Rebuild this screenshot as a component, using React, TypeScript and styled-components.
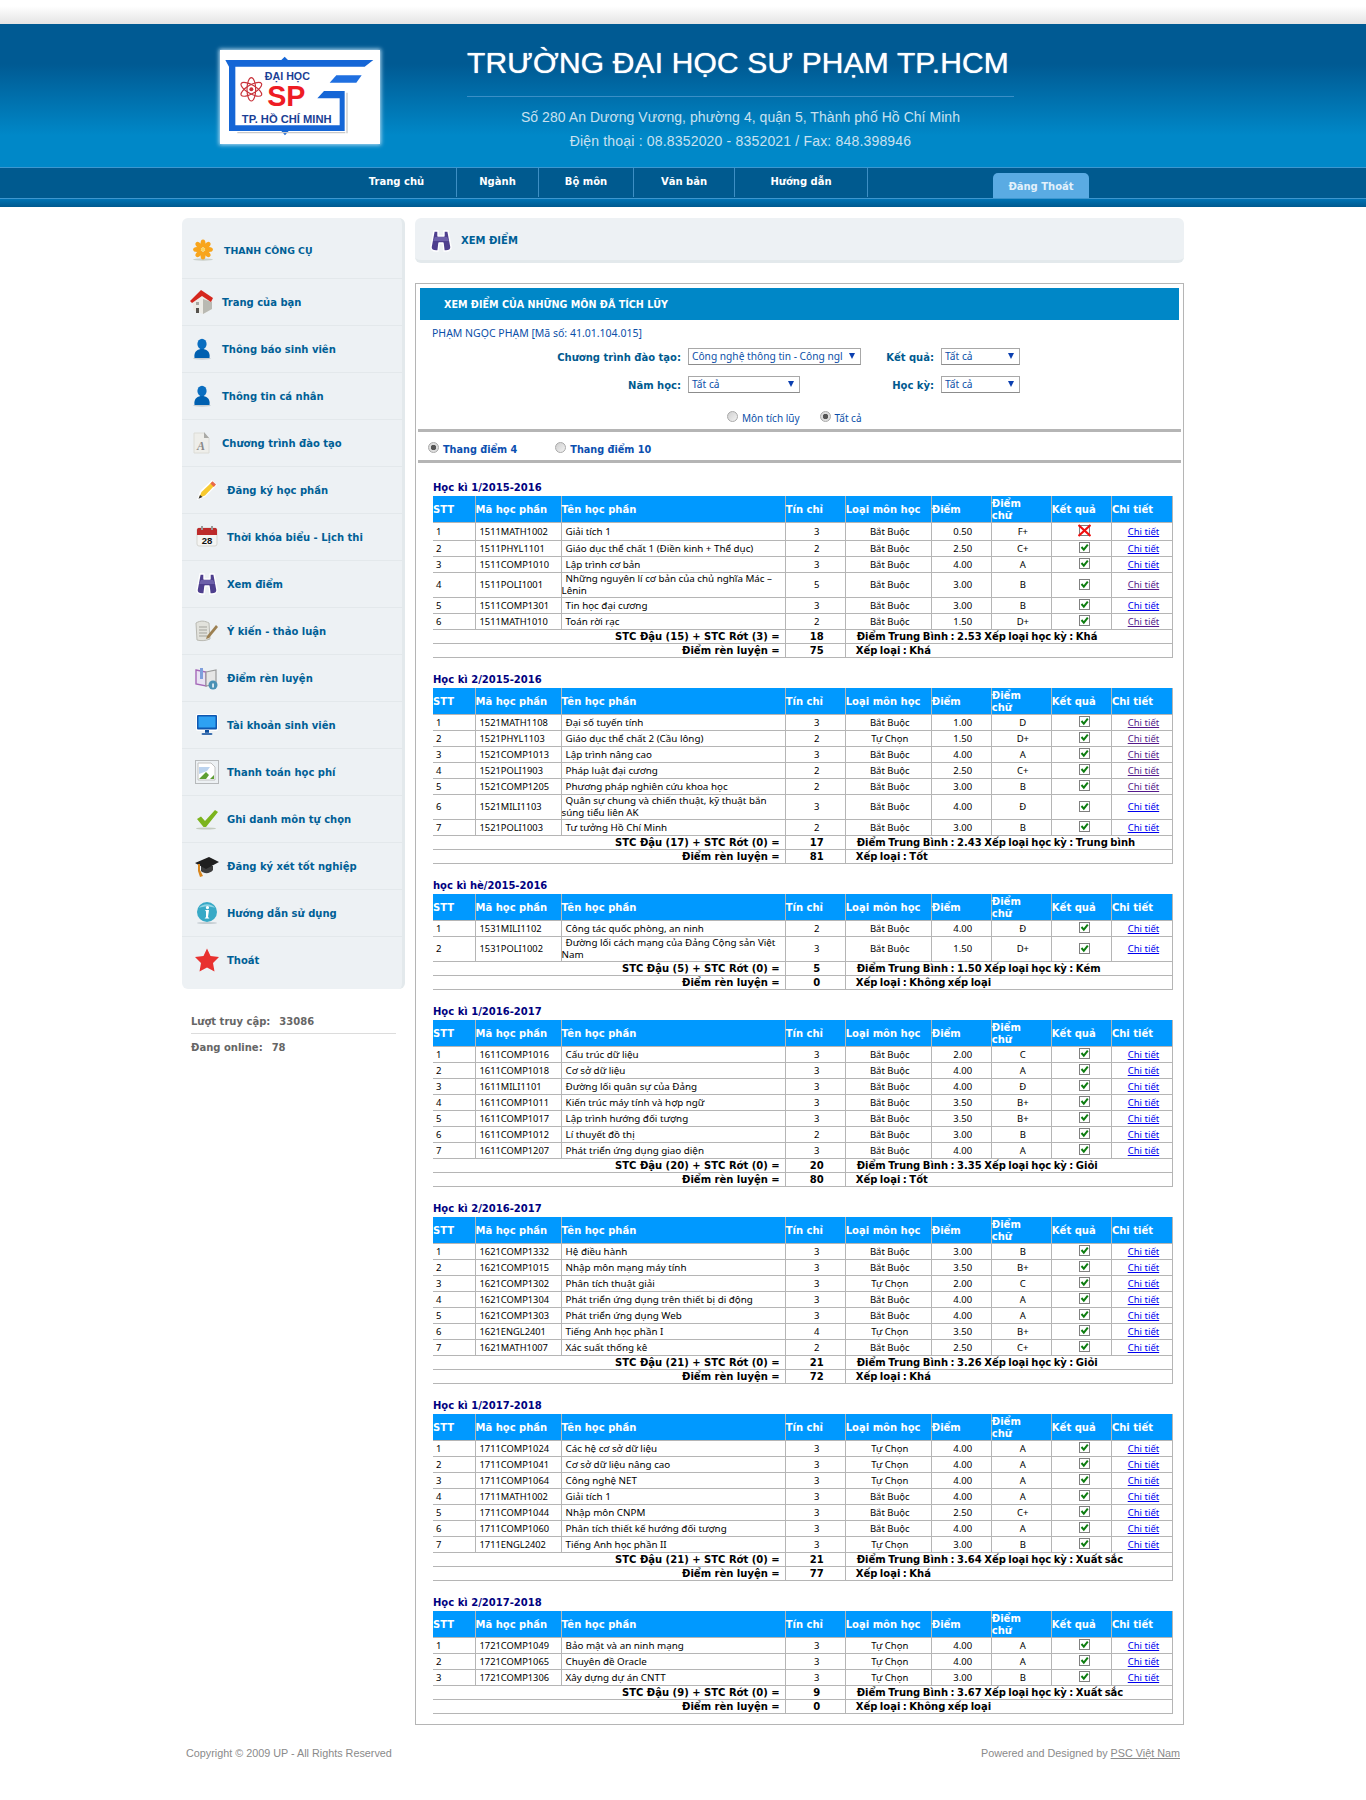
import { FC, ReactNode } from 'react'
import styled, { createGlobalStyle } from 'styled-components'

const BOLD_FONT = `'DejaVu Sans', Verdana, sans-serif`
const TEXT_FONT = `'Noto Sans', 'Liberation Sans', sans-serif`

const GlobalStyle = createGlobalStyle`
	html, body {
		margin: 0;
		padding: 0;
		background: #fff;
	}
	body {
		font-family: ${TEXT_FONT};
		font-size: 10px;
		color: #000;
	}
`

/* ---------- data ---------- */

const BB = 'Bắt Buộc'
const TC = 'Tự Chọn'

type Subject = {
	code: string
	name: string
	credits: number
	kind: string
	score: string
	letter: string
	failed?: boolean
	visited?: boolean
}

type Semester = {
	title: string
	passed: number
	failed: number
	total: number
	gpa: string
	rank: string
	conduct: number
	conductRank: string
	subjects: Subject[]
}

const s = (code: string, name: string, credits: number, kind: string, score: string, letter: string, visited = false, failed = false): Subject => ({
	code,
	name,
	credits,
	kind,
	score,
	letter,
	visited,
	failed,
})

const semesters: Semester[] = [
	{
		title: 'Học kì 1/2015-2016',
		passed: 15,
		failed: 3,
		total: 18,
		gpa: '2.53',
		rank: 'Khá',
		conduct: 75,
		conductRank: 'Khá',
		subjects: [
			s('1511MATH1002', 'Giải tích 1', 3, BB, '0.50', 'F+', false, true),
			s('1511PHYL1101', 'Giáo dục thể chất 1 (Điền kinh + Thể dục)', 2, BB, '2.50', 'C+'),
			s('1511COMP1010', 'Lập trình cơ bản', 3, BB, '4.00', 'A'),
			s('1511POLI1001', 'Những nguyên lí cơ bản của chủ nghĩa Mác –\nLênin', 5, BB, '3.00', 'B', true),
			s('1511COMP1301', 'Tin học đại cương', 3, BB, '3.00', 'B'),
			s('1511MATH1010', 'Toán rời rạc', 2, BB, '1.50', 'D+', true),
		],
	},
	{
		title: 'Học kì 2/2015-2016',
		passed: 17,
		failed: 0,
		total: 17,
		gpa: '2.43',
		rank: 'Trung bình',
		conduct: 81,
		conductRank: 'Tốt',
		subjects: [
			s('1521MATH1108', 'Đại số tuyến tính', 3, BB, '1.00', 'D', true),
			s('1521PHYL1103', 'Giáo dục thể chất 2 (Cầu lông)', 2, TC, '1.50', 'D+', true),
			s('1521COMP1013', 'Lập trình nâng cao', 3, BB, '4.00', 'A', true),
			s('1521POLI1903', 'Pháp luật đại cương', 2, BB, '2.50', 'C+', true),
			s('1521COMP1205', 'Phương pháp nghiên cứu khoa học', 2, BB, '3.00', 'B', true),
			s('1521MILI1103', 'Quân sự chung và chiến thuật, kỹ thuật bắn\nsúng tiểu liên AK', 3, BB, '4.00', 'Đ'),
			s('1521POLI1003', 'Tư tưởng Hồ Chí Minh', 2, BB, '3.00', 'B'),
		],
	},
	{
		title: 'học kì hè/2015-2016',
		passed: 5,
		failed: 0,
		total: 5,
		gpa: '1.50',
		rank: 'Kém',
		conduct: 0,
		conductRank: 'Không xếp loại',
		subjects: [
			s('1531MILI1102', 'Công tác quốc phòng, an ninh', 2, BB, '4.00', 'Đ'),
			s('1531POLI1002', 'Đường lối cách mạng của Đảng Cộng sản Việt\nNam', 3, BB, '1.50', 'D+'),
		],
	},
	{
		title: 'Học kì 1/2016-2017',
		passed: 20,
		failed: 0,
		total: 20,
		gpa: '3.35',
		rank: 'Giỏi',
		conduct: 80,
		conductRank: 'Tốt',
		subjects: [
			s('1611COMP1016', 'Cấu trúc dữ liệu', 3, BB, '2.00', 'C'),
			s('1611COMP1018', 'Cơ sở dữ liệu', 3, BB, '4.00', 'A'),
			s('1611MILI1101', 'Đường lối quân sự của Đảng', 3, BB, '4.00', 'Đ'),
			s('1611COMP1011', 'Kiến trúc máy tính và hợp ngữ', 3, BB, '3.50', 'B+'),
			s('1611COMP1017', 'Lập trình hướng đối tượng', 3, BB, '3.50', 'B+'),
			s('1611COMP1012', 'Lí thuyết đồ thị', 2, BB, '3.00', 'B'),
			s('1611COMP1207', 'Phát triển ứng dụng giao diện', 3, BB, '4.00', 'A'),
		],
	},
	{
		title: 'Học kì 2/2016-2017',
		passed: 21,
		failed: 0,
		total: 21,
		gpa: '3.26',
		rank: 'Giỏi',
		conduct: 72,
		conductRank: 'Khá',
		subjects: [
			s('1621COMP1332', 'Hệ điều hành', 3, BB, '3.00', 'B'),
			s('1621COMP1015', 'Nhập môn mạng máy tính', 3, BB, '3.50', 'B+'),
			s('1621COMP1302', 'Phân tích thuật giải', 3, TC, '2.00', 'C'),
			s('1621COMP1304', 'Phát triển ứng dụng trên thiết bị di động', 3, BB, '4.00', 'A'),
			s('1621COMP1303', 'Phát triển ứng dụng Web', 3, BB, '4.00', 'A'),
			s('1621ENGL2401', 'Tiếng Anh học phần I', 4, TC, '3.50', 'B+'),
			s('1621MATH1007', 'Xác suất thống kê', 2, BB, '2.50', 'C+'),
		],
	},
	{
		title: 'Học kì 1/2017-2018',
		passed: 21,
		failed: 0,
		total: 21,
		gpa: '3.64',
		rank: 'Xuất sắc',
		conduct: 77,
		conductRank: 'Khá',
		subjects: [
			s('1711COMP1024', 'Các hệ cơ sở dữ liệu', 3, TC, '4.00', 'A'),
			s('1711COMP1041', 'Cơ sở dữ liệu nâng cao', 3, TC, '4.00', 'A'),
			s('1711COMP1064', 'Công nghệ NET', 3, TC, '4.00', 'A'),
			s('1711MATH1002', 'Giải tích 1', 3, BB, '4.00', 'A'),
			s('1711COMP1044', 'Nhập môn CNPM', 3, BB, '2.50', 'C+'),
			s('1711COMP1060', 'Phân tích thiết kế hướng đối tượng', 3, BB, '4.00', 'A'),
			s('1711ENGL2402', 'Tiếng Anh học phần II', 3, TC, '3.00', 'B'),
		],
	},
	{
		title: 'Học kì 2/2017-2018',
		passed: 9,
		failed: 0,
		total: 9,
		gpa: '3.67',
		rank: 'Xuất sắc',
		conduct: 0,
		conductRank: 'Không xếp loại',
		subjects: [
			s('1721COMP1049', 'Bảo mật và an ninh mạng', 3, TC, '4.00', 'A'),
			s('1721COMP1065', 'Chuyên đề Oracle', 3, TC, '4.00', 'A'),
			s('1721COMP1306', 'Xây dựng dự án CNTT', 3, TC, '3.00', 'B'),
		],
	},
]

const columns: [string, number][] = [
	['STT', 42],
	['Mã học phần', 86],
	['Tên học phần', 224],
	['Tín chỉ', 60],
	['Loại môn học', 86],
	['Điểm', 60],
	['Điểm\nchữ', 60],
	['Kết quả', 60],
	['Chi tiết', 61],
]

/* ---------- drawings ---------- */

const Svg: FC<{ children: ReactNode }> = ({ children }) => (
	<svg width='24' height='24' viewBox='0 0 24 24'>
		{children}
	</svg>
)

const FlowerIcon = () => (
	<Svg>
		<ellipse cx='12' cy='21.5' rx='10' ry='1.2' fill='#c9cfc8' />
		{[0, 45, 90, 135, 180, 225, 270, 315].map((a) => (
			<ellipse key={a} cx='12' cy='5.6' rx='2.5' ry='4' fill='#f8a51c' transform={`rotate(${a} 12 11.5)`} />
		))}
		<circle cx='12' cy='11.5' r='2' fill='#fbd25a' />
	</Svg>
)

const HouseIcon = () => (
	<Svg>
		<path d='M3 12 L13 6 L22 11 V19 L13 24 L3 20 Z' fill='#ecebe6' />
		<path d='M13 9 L22 12 V19 L13 24 Z' fill='#b9b9b2' />
		<path d='M0 11 L11 0 L14 2 L23 8 L21 12 L12 6 L2 13 Z' fill='#d5271d' />
		<rect x='6' y='18' width='3' height='5' fill='#55524d' />
		<rect x='6' y='12' width='3' height='3' fill='#a9a79f' />
	</Svg>
)

const PersonIcon = () => (
	<Svg>
		<ellipse cx='12' cy='21.5' rx='9' ry='1.2' fill='#c6cdd2' />
		<ellipse cx='12' cy='7' rx='4.6' ry='5.2' fill='#0a6ec0' />
		<path d='M4.5 21 C3.5 14 8 12 12 12 C16 12 20.5 14 19.5 21 Z' fill='#0060b0' />
	</Svg>
)

const DocIcon = () => (
	<Svg>
		<path d='M4 2 H14 L19 7 V22 H4 Z' fill='#eeeeea' stroke='#dcdcd6' />
		<path d='M14 1 L19 7 H14 Z' fill='#aaaaa6' />
		<text x='11' y='18.5' fontSize='12' fontStyle='italic' fontFamily='Liberation Serif, serif' fill='#888' textAnchor='middle'>
			A
		</text>
	</Svg>
)

const PencilIcon = () => (
	<Svg>
		<path d='M2 22 L5 13 L17 2 L22 7 L10 19 Z' fill='#fff' />
		<path d='M4 20 L6.5 14 L17 4 L20 7 L10 17.5 Z' fill='#f7c92e' />
		<path d='M15.4 5.5 L17.5 3.2 L21 6.6 L18.8 9 Z' fill='#e8694a' />
		<path d='M3.5 20.8 L5 17 L7.5 19 Z' fill='#333' />
	</Svg>
)

const CalendarIcon = () => (
	<Svg>
		<rect x='2' y='3' width='20' height='18' rx='2' fill='#f4f4f2' stroke='#d5d5d0' />
		<path d='M2 10 V5 C2 3.5 3 3 4 3 H20 C21 3 22 3.5 22 5 V10 Z' fill='#bd2a2a' />
		<rect x='6' y='1' width='2' height='4' fill='#999' />
		<rect x='16' y='1' width='2' height='4' fill='#999' />
		<text x='12' y='19' fontSize='9.5' fontWeight='700' fontFamily='Liberation Sans, sans-serif' fill='#111' textAnchor='middle'>
			28
		</text>
	</Svg>
)

const BinocularsIcon = () => (
	<Svg>
		<path
			d='M5 2 H9 V7 H15 V2 H19 L22 18 C22 21 20 22 17 22 H15 L14 14 H10 L9 22 H7 C4 22 2 21 2 18 Z'
			fill='#4e3f8e'
			stroke='#fff'
			strokeWidth='1.4'
			strokeLinejoin='round'
		/>
		<path d='M6 8 H18 L20 12 H4 Z' fill='#6d60aa' />
	</Svg>
)

const NoteIcon = () => (
	<Svg>
		<path d='M1 4 C6 1 10 2 14 4 L15 20 C10 22 6 22 2 21 Z' fill='#e2e2dc' stroke='#b9b9b2' />
		<path d='M4 8 H12 M4 11 H12 M4 14 H12 M4 17 H12' stroke='#a3a39c' />
		<path d='M12 17 L21 6 L23 8 L14 19 L11 20 Z' fill='#9c8052' />
	</Svg>
)

const BookIcon = () => (
	<Svg>
		<path d='M1 4 L11 6 V20 L1 18 Z' fill='#e9e3f3' stroke='#a568b8' strokeWidth='1.4' />
		<path d='M11 6 L21 4 V18 L11 20 Z' fill='#e6e6e6' stroke='#9a9a9a' strokeWidth='1.2' />
		<rect x='5' y='2' width='3' height='11' fill='#7f9fdc' />
		<circle cx='18' cy='19' r='4.5' fill='#4a91b5' />
		<rect x='17.3' y='17.5' width='1.5' height='4' fill='#fff' />
	</Svg>
)

const MonitorIcon = () => (
	<Svg>
		<rect x='1' y='1' width='22' height='17' rx='2' fill='#fff' />
		<rect x='2' y='2' width='20' height='14.5' rx='1' fill='#0f57b0' />
		<rect x='3.5' y='3.5' width='17' height='11' fill='#2ea1f2' />
		<rect x='10' y='17' width='4' height='3' fill='#0c4d9c' />
		<rect x='6.5' y='20' width='11' height='2' rx='1' fill='#0c4d9c' stroke='#fff' strokeWidth='.4' />
	</Svg>
)

const BrokenImageIcon = () => (
	<Svg>
		<rect x='.5' y='.5' width='23' height='23' fill='#edf1f4' stroke='#b6b9bb' />
		<path d='M3 3 H16 L20 7 V20 H3 Z' fill='#fff' stroke='#c2c2c2' />
		<path d='M4 7 H15 L12 11 L4 14 Z' fill='#bcd3ee' />
		<path d='M4 19 L11 12 L14 15 L11 19 Z M15 19 L19 15 V19 Z' fill='#5e9f33' />
	</Svg>
)

const CheckIcon = () => (
	<Svg>
		<ellipse cx='11' cy='21.5' rx='10' ry='1' fill='#c4cbc0' />
		<path d='M2 12 L6 9.5 L10 14 L20 3 L23 5 L11 20 H8.5 Z' fill='#7cb41d' />
	</Svg>
)

const CapIcon = () => (
	<Svg>
		<path d='M6 12 V17 C9 20 15 20 18 16 V12 Z' fill='#3d3d3d' />
		<path d='M0 9 L14 3 L24 8 L11 15 Z' fill='#1f1f1f' />
		<path d='M3 10 V17 L5 23 L8 22 L5 16 V10 Z' fill='#d8861e' />
	</Svg>
)

const InfoIcon = () => (
	<Svg>
		<ellipse cx='12' cy='22' rx='10' ry='1.1' fill='#c4cdd2' />
		<circle cx='12' cy='11' r='10' fill='#38a9c6' />
		<path d='M4 7 C7 2 17 2 20 7 C15 5 9 5 4 7 Z' fill='#8fd4e4' />
		<path d='M12.5 5 a1.6 1.6 0 1 1 -.1 0 Z M10 9 H14 L13 16 L14.5 17.5 H9.5 L11 16 L11 10.5 Z' fill='#fff' />
	</Svg>
)

const StarIcon = () => (
	<Svg>
		<path d='M12 0.5 L15.5 8 L24 9 L18 15 L19.5 23.5 L12 19.5 L4.5 23.5 L6 15 L0 9 L8.5 8 Z' fill='#e8312f' />
	</Svg>
)

const Logo = () => (
	<svg width='160' height='94' viewBox='6 12 480 282'>
		<path
			d='M22 42 H190 L200 32 L210 42 H466 L440 62 H52 V238 H365 V157 H298 L318 135 H380 V255 H212 L201 268 L190 255 H33 V62 Z'
			fill='#1566d6'
		/>
		<path d='M355 88 H431 L415 110 H335 Z' fill='#1f6fe0' />
		<path d='M58 258 H382 V262 H58 Z M385 140 H389 V262 H385 Z' fill='#c9c9c9' />
		<g fill='none' stroke='#c8323a' strokeWidth='3.5'>
			<ellipse cx='100' cy='130' rx='35' ry='13' transform='rotate(30 100 130)' />
			<ellipse cx='100' cy='130' rx='35' ry='13' transform='rotate(-30 100 130)' />
			<ellipse cx='100' cy='130' rx='35' ry='13' transform='rotate(90 100 130)' />
		</g>
		<circle cx='100' cy='130' r='6' fill='#c8323a' />
		<text x='208' y='102' fontFamily='Liberation Sans, sans-serif' fontSize='32' fontWeight='700' fill='#1b3f95' textAnchor='middle'>
			ĐẠI HỌC
		</text>
		<text x='205' y='179' fontFamily='Liberation Sans, sans-serif' fontSize='86' fontWeight='700' fill='#ee1c25' textAnchor='middle'>
			SP
		</text>
		<text x='206' y='230' fontFamily='Liberation Sans, sans-serif' fontSize='33.5' fontWeight='700' fill='#1b3f95' textAnchor='middle'>
			TP. HỒ CHÍ MINH
		</text>
	</svg>
)

const ResultMark: FC<{ failed?: boolean }> = ({ failed }) => (
	<svg width='13' height='13' viewBox='0 0 13 13'>
		<rect x='1.5' y='1.5' width='10' height='10' fill='#fff' stroke='#808080' />
		{failed ? (
			<path d='M0.5 1 L12.5 12 M12.5 1 L0.5 12' stroke='#f01010' strokeWidth='2.2' />
		) : (
			<path d='M3.5 6 L5.8 8.6 L9.8 3.6' fill='none' stroke='#0d7d10' strokeWidth='2' />
		)}
	</svg>
)

/* ---------- chrome ---------- */

const TopStrip = styled.div`
	height: 24px;
	background: linear-gradient(#fff 0%, #fff 25%, #e4e4e4 100%);
`

const HeaderBand = styled.header`
	height: 143px;
	background: linear-gradient(#005a93 0%, #005a93 28%, #0088c8 78%, #0088c8 100%);
`

const Frame = styled.div`
	width: 1002px;
	margin: 0 auto;
`

const HeaderInner = styled(Frame)`
	display: flex;
	height: 100%;
`

const LogoBox = styled.div`
	width: 160px;
	height: 94px;
	margin: 26px 0 0 38px;
	background: #fff;
	box-shadow: 0 0 4px 1px #b9dcf2;
	line-height: 0;
`

const SchoolInfo = styled.div`
	width: 547px;
	margin-left: 87px;
	text-align: center;
	font-family: 'Liberation Sans', Arial, sans-serif;
	color: #c9e1f0;
`

const SchoolName = styled.h1`
	box-sizing: border-box;
	margin: 19px 0 0;
	height: 39px;
	padding-right: 9px;
	font-size: 30px;
	line-height: 39px;
	font-weight: 400;
	letter-spacing: 0.15px;
	color: #fff;
	white-space: nowrap;
	text-shadow: 0 0 1px #fff;
`

const Divider = styled.div`
	height: 1px;
	margin: 14px 0 8px;
	background: #3a8fc6;
`

const InfoLine = styled.div<{ $spacing: number }>`
	font-size: 14px;
	line-height: 24px;
	letter-spacing: ${(p) => p.$spacing}px;
	white-space: nowrap;
`

const NavBand = styled.nav`
	height: 30px;
	border-top: 1px solid #3d97cf;
	border-bottom: 1px solid #3d97cf;
	background: #005a8f;
`

const NavInner = styled(Frame)`
	display: flex;
	height: 100%;
	padding-left: 155px;
	box-sizing: border-box;
`

const NavItem = styled.a<{ $w: number }>`
	width: ${(p) => p.$w}px;
	box-sizing: border-box;
	height: 29px;
	text-align: center;
	font: 700 10px/27px ${BOLD_FONT};
	color: #fff;
	border-right: 1px solid #3d8fc4;
`

const LogoutTab = styled.a`
	margin: 5px 95px 0 auto;
	width: 96px;
	height: 25px;
	border-radius: 5px 5px 0 0;
	background: #5aabe3;
	color: #e2f1fb;
	text-align: center;
	font: 700 10px/27px ${BOLD_FONT};
`

const NavFoot = styled.div`
	height: 8px;
	background: linear-gradient(#0073b4, #00598f);
`

/* ---------- sidebar ---------- */

const Page = styled(Frame)`
	display: flex;
	gap: 10px;
	padding-top: 11px;
`

const Side = styled.aside`
	width: 223px;
	flex: none;
`

const SideMenu = styled.div`
	background: #edf1f4;
	border-right: 3px solid #e3e9ec;
	border-radius: 6px;
	overflow: hidden;
`

const SideRow = styled.a<{ $pad: number; $h?: number; $gap?: number; $top?: number; $bottom?: number; $plain?: boolean }>`
	display: flex;
	align-items: center;
	box-sizing: border-box;
	height: ${(p) => p.$h ?? 47}px;
	padding: ${(p) => p.$top ?? 0}px 0 ${(p) => p.$bottom ?? 0}px ${(p) => p.$pad}px;
	gap: ${(p) => p.$gap ?? 8}px;
	border-bottom: ${(p) => (p.$plain ? 'none' : '1px solid #e3e8eb')};
	font: 700 10px ${BOLD_FONT};
	color: #005f96;
	white-space: nowrap;

	svg {
		flex: none;
	}
`

const SideHeading = styled.span`
	font-size: 9.4px;
`

const Stats = styled.div`
	margin: 26px 9px 0;
	font: 700 10px/14px ${BOLD_FONT};
	color: #666;
`

const StatRow = styled.div<{ $line?: boolean }>`
	display: flex;
	gap: 9px;
	height: 18px;
	border-bottom: ${(p) => (p.$line ? '1px solid #dcdcdc' : 'none')};
	margin-bottom: 7px;
`

/* ---------- main column ---------- */

const Main = styled.main`
	width: 769px;
	flex: none;
`

const TitlePanel = styled.div`
	display: flex;
	align-items: center;
	gap: 8px;
	box-sizing: border-box;
	height: 45px;
	padding: 3px 0 0 14px;
	background: #edf1f4;
	border-bottom: 3px solid #e3e9ec;
	border-radius: 6px;
	font: 700 10px ${BOLD_FONT};
	color: #005f96;
`

const ContentBox = styled.section`
	box-sizing: border-box;
	height: 1442px;
	margin-top: 20px;
	padding: 4px 3px 0;
	border: 1px solid #b5b5b5;
`

const BlueBar = styled.h2`
	height: 32px;
	margin: 0 1px;
	padding-left: 24px;
	background: #0087c7;
	color: #fff;
	font: 700 9.6px/34px ${BOLD_FONT};
`

const StudentName = styled.div`
	margin: 6px 0 8px 13px;
	height: 14px;
	line-height: 14px;
	font-size: 10.5px;
	color: #0b4fa8;
`

const FilterRow = styled.div`
	display: flex;
	align-items: center;
	height: 17px;
	margin-bottom: 11px;
`

const FilterLabel = styled.label<{ $w: number }>`
	width: ${(p) => p.$w}px;
	margin-right: 7px;
	padding-top: 1px;
	text-align: right;
	font: 700 10px ${BOLD_FONT};
	color: #005a8f;
	white-space: nowrap;
`

const SelectBox = styled.div<{ $w: number }>`
	position: relative;
	box-sizing: border-box;
	width: ${(p) => p.$w}px;
	height: 17px;
	padding-left: 3px;
	border: 1px solid #a8a8a8;
	border-bottom-color: #8c8c8c;
	background: #fff;
	color: #0b4fa8;
	font-size: 10.2px;
	line-height: 14px;
	white-space: nowrap;
	overflow: hidden;

	&::after {
		content: '';
		position: absolute;
		top: 4px;
		right: 5px;
		border-style: solid;
		border-width: 6px 3px 0;
		border-color: #0b3fb0 transparent transparent;
	}
`

const RadioRow = styled.div`
	display: flex;
	align-items: center;
	height: 14px;
	margin: 18px 0 4px 308px;
	color: #0b4fa8;
	font-size: 10px;
`

const Radio = styled.span<{ $on?: boolean }>`
	display: inline-block;
	box-sizing: border-box;
	width: 11px;
	height: 11px;
	margin-right: 4px;
	position: relative;
	top: -2px;
	border-radius: 50%;
	border: 1px solid #a9a9a9;
	background: ${(p) =>
		p.$on
			? 'radial-gradient(circle, #555 0 2.5px, #ddd 3px)'
			: 'linear-gradient(135deg, #cfcfcf, #f2f2f2)'};
`

const RadioText = styled.span<{ $mr?: number }>`
	margin-right: ${(p) => p.$mr ?? 0}px;
`

const GrayRule = styled.div`
	height: 3px;
	margin: 0 -1px;
	background: #b5b5b5;
`

const ScaleRow = styled.div`
	display: flex;
	align-items: center;
	height: 28px;
	box-sizing: border-box;
	padding: 6px 0 0 9px;
	font: 700 9.7px ${BOLD_FONT};
	color: #0b4fb0;
`

const SemesterList = styled.div`
	padding-top: 16px;
`

const SemesterBlock = styled.div`
	margin: 0 0 13px 14px;
`

const SemesterTitle = styled.h3`
	height: 17px;
	margin: 0;
	font: 700 10px/17px ${BOLD_FONT};
	color: #000080;
`

const GradeTable = styled.table`
	width: 740px;
	table-layout: fixed;
	border-collapse: collapse;
	font-size: 9.5px;
	line-height: 12px;

	td,
	th {
		box-sizing: border-box;
		padding: 0;
		border: 1px solid #b5b5b5;
	}
	tr > *:first-child {
		border-left: none;
	}
`

const HeadRow = styled.tr`
	height: 26px;
`

const HeadCell = styled.th<{ $w: number }>`
	width: ${(p) => p.$w}px;
	background: #0099ff;
	color: #fff;
	text-align: left;
	white-space: pre-line;
	font: 700 10px/12px ${BOLD_FONT};
	border-top-color: #0099ff !important;
`

const DataRow = styled.tr<{ $h: number }>`
	height: ${(p) => p.$h}px;
`

const Cell = styled.td<{ $indent?: number; $size?: number }>`
	text-align: ${(p) => (p.$indent === undefined ? 'center' : 'left')};
	text-indent: ${(p) => p.$indent ?? 0}px;
	font-size: ${(p) => p.$size ?? 9.5}px;
	white-space: pre-line;
	padding-left: ${(p) => (p.$indent === undefined ? 3 : 0)}px !important;
`

const MarkCell = styled.td`
	text-align: center;
	line-height: 0;
	padding-left: 6px !important;

	svg {
		position: relative;
		top: -1px;
	}
`

const DetailLink = styled.a<{ $visited?: boolean }>`
	color: ${(p) => (p.$visited ? '#551a8b' : '#0000ee')};
	text-decoration: underline;
`

const SumRow = styled.tr`
	height: 14px;
	font: 700 10px/13px ${BOLD_FONT};
`

const SumRight = styled.td`
	text-align: right;
	padding-right: 5px !important;
`

const SumCenter = styled.td`
	text-align: center;
	padding-left: 3px !important;
`

const SumLeft = styled.td<{ $pad: number }>`
	padding-left: ${(p) => p.$pad}px !important;
	word-spacing: -1px;
`

const Footer = styled(Frame)`
	display: flex;
	justify-content: space-between;
	box-sizing: border-box;
	height: 75px;
	padding: 21px 4px 0 4px;
	font: 10.8px/14px 'Liberation Sans', Arial, sans-serif;
	color: #8a8a8a;

	a {
		text-decoration: underline;
	}
`

/* ---------- parts ---------- */

const menu: [string, ReactNode, number][] = [
	['Trang của bạn', <HouseIcon />, 8],
	['Thông báo sinh viên', <PersonIcon />, 8],
	['Thông tin cá nhân', <PersonIcon />, 8],
	['Chương trình đào tạo', <DocIcon />, 8],
	['Đăng ký học phần', <PencilIcon />, 13],
	['Thời khóa biểu - Lịch thi', <CalendarIcon />, 13],
	['Xem điểm', <BinocularsIcon />, 13],
	['Ý kiến - thảo luận', <NoteIcon />, 13],
	['Điểm rèn luyện', <BookIcon />, 13],
	['Tài khoản sinh viên', <MonitorIcon />, 13],
	['Thanh toán học phí', <BrokenImageIcon />, 13],
	['Ghi danh môn tự chọn', <CheckIcon />, 13],
	['Đăng ký xét tốt nghiệp', <CapIcon />, 13],
	['Hướng dẫn sử dụng', <InfoIcon />, 13],
]

const SemesterTable: FC<{ data: Semester }> = ({ data }) => (
	<SemesterBlock>
		<SemesterTitle>{data.title}</SemesterTitle>
		<GradeTable>
			<thead>
				<HeadRow>
					{columns.map(([label, w]) => (
						<HeadCell key={label} $w={w}>
							{label}
						</HeadCell>
					))}
				</HeadRow>
			</thead>
			<tbody>
				{data.subjects.map((row, i) => (
					<DataRow key={row.code} $h={row.failed ? 18 : 16}>
						<Cell $indent={3}>{i + 1}</Cell>
						<Cell $indent={4} $size={9.3}>
							{row.code}
						</Cell>
						<Cell $indent={4} $size={9.8}>
							{row.name}
						</Cell>
						<Cell>{row.credits}</Cell>
						<Cell>{row.kind}</Cell>
						<Cell>{row.score}</Cell>
						<Cell>{row.letter}</Cell>
						<MarkCell>
							<ResultMark failed={row.failed} />
						</MarkCell>
						<Cell>
							<DetailLink $visited={row.visited}>Chi tiết</DetailLink>
						</Cell>
					</DataRow>
				))}
				<SumRow>
					<SumRight colSpan={3}>
						STC Đậu ({data.passed}) + STC Rớt ({data.failed}) =
					</SumRight>
					<SumCenter>{data.total}</SumCenter>
					<SumLeft colSpan={5} $pad={11}>
						Điểm Trung Bình : {data.gpa} Xếp loại học kỳ : {data.rank}
					</SumLeft>
				</SumRow>
				<SumRow>
					<SumRight colSpan={3}>Điểm rèn luyện =</SumRight>
					<SumCenter>{data.conduct}</SumCenter>
					<SumLeft colSpan={5} $pad={10}>
						Xếp loại : {data.conductRank}
					</SumLeft>
				</SumRow>
			</tbody>
		</GradeTable>
	</SemesterBlock>
)

const App = () => (
	<>
		<GlobalStyle />
		<TopStrip />
		<HeaderBand>
			<HeaderInner>
				<LogoBox>
					<Logo />
				</LogoBox>
				<SchoolInfo>
					<SchoolName>TRƯỜNG ĐẠI HỌC SƯ PHẠM TP.HCM</SchoolName>
					<Divider />
					<InfoLine $spacing={0.05}>Số 280 An Dương Vương, phường 4, quận 5, Thành phố Hồ Chí Minh</InfoLine>
					<InfoLine $spacing={0.18}>Điện thoại : 08.8352020 - 8352021 / Fax: 848.398946</InfoLine>
				</SchoolInfo>
			</HeaderInner>
		</HeaderBand>
		<NavBand>
			<NavInner>
				<NavItem $w={120}>Trang chủ</NavItem>
				<NavItem $w={82}>Ngành</NavItem>
				<NavItem $w={95}>Bộ môn</NavItem>
				<NavItem $w={101}>Văn bản</NavItem>
				<NavItem $w={133}>Hướng dẫn</NavItem>
				<LogoutTab>Đăng Thoát</LogoutTab>
			</NavInner>
		</NavBand>
		<NavFoot />
		<Page>
			<Side>
				<SideMenu>
					<SideRow $pad={9} $h={61} $gap={9} $top={4}>
						<FlowerIcon />
						<SideHeading>THANH CÔNG CỤ</SideHeading>
					</SideRow>
					{menu.map(([label, icon, pad]) => (
						<SideRow key={label} $pad={pad}>
							{icon}
							{label}
						</SideRow>
					))}
					<SideRow $pad={13} $h={52} $bottom={6} $plain>
						<StarIcon />
						Thoát
					</SideRow>
				</SideMenu>
				<Stats>
					<StatRow $line>
						<span>Lượt truy cập:</span>
						<span>33086</span>
					</StatRow>
					<StatRow>
						<span>Đang online:</span>
						<span>78</span>
					</StatRow>
				</Stats>
			</Side>
			<Main>
				<TitlePanel>
					<BinocularsIcon />
					XEM ĐIỂM
				</TitlePanel>
				<ContentBox>
					<BlueBar>XEM ĐIỂM CỦA NHỮNG MÔN ĐÃ TÍCH LŨY</BlueBar>
					<StudentName>PHẠM NGỌC PHẠM [Mã số: 41.01.104.015]</StudentName>
					<FilterRow>
						<FilterLabel $w={262}>Chương trình đào tạo:</FilterLabel>
						<SelectBox $w={173}>Công nghệ thông tin - Công ngl</SelectBox>
						<FilterLabel $w={73}>Kết quả:</FilterLabel>
						<SelectBox $w={79}>Tất cả</SelectBox>
					</FilterRow>
					<FilterRow>
						<FilterLabel $w={262}>Năm học:</FilterLabel>
						<SelectBox $w={112}>Tất cả</SelectBox>
						<FilterLabel $w={134}>Học kỳ:</FilterLabel>
						<SelectBox $w={79}>Tất cả</SelectBox>
					</FilterRow>
					<RadioRow>
						<Radio />
						<RadioText $mr={20}>Môn tích lũy</RadioText>
						<Radio $on />
						<RadioText>Tất cả</RadioText>
					</RadioRow>
					<GrayRule />
					<ScaleRow>
						<Radio $on />
						<RadioText $mr={38}>Thang điểm 4</RadioText>
						<Radio />
						<RadioText>Thang điểm 10</RadioText>
					</ScaleRow>
					<GrayRule />
					<SemesterList>
						{semesters.map((data) => (
							<SemesterTable key={data.title} data={data} />
						))}
					</SemesterList>
				</ContentBox>
			</Main>
		</Page>
		<Footer>
			<span>Copyright © 2009 UP - All Rights Reserved</span>
			<span>
				Powered and Designed by <a>PSC Việt Nam</a>
			</span>
		</Footer>
	</>
)

export default App
